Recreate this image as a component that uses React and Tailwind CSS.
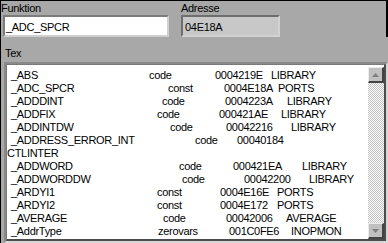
import React from "react";

const rows = [
  { n: "_ABS", t: "code", a: "0004219E", l: "LIBRARY", w: ["w-[138px]", "w-[66px]", "w-[56px]"] },
  { n: "_ADC_SPCR", t: "const", a: "0004E18A", l: "PORTS", w: ["w-[157px]", "w-[56px]", "w-[54px]"] },
  { n: "_ADDDINT", t: "code", a: "0004223A", l: "LIBRARY", w: ["w-[151px]", "w-[63px]", "w-[62px]"] },
  { n: "_ADDFIX", t: "code", a: "000421AE", l: "LIBRARY", w: ["w-[146px]", "w-[62px]", "w-[62px]"] },
  { n: "_ADDINTDW", t: "code", a: "00042216", l: "LIBRARY", w: ["w-[159px]", "w-[56px]", "w-[65px]"] },
  { n: "_ADDRESS_ERROR_INT", t: "code", a: "00040184", l: "", w: ["w-[184px]", "w-[42px]", "w-[60px]"] },
  { wrap: "CTLINTER" },
  { n: "_ADDWORD", t: "code", a: "000421EA", l: "LIBRARY", w: ["w-[168px]", "w-[54px]", "w-[69px]"] },
  { n: "_ADDWORDDW", t: "code", a: "00042200", l: "LIBRARY", w: ["w-[171px]", "w-[62px]", "w-[65px]"] },
  { n: "_ARDYI1", t: "const", a: "0004E16E", l: "PORTS", w: ["w-[146px]", "w-[63px]", "w-[57px]"] },
  { n: "_ARDYI2", t: "const", a: "0004E172", l: "PORTS", w: ["w-[146px]", "w-[63px]", "w-[57px]"] },
  { n: "_AVERAGE", t: "code", a: "00042006", l: "AVERAGE", w: ["w-[152px]", "w-[63px]", "w-[60px]"] },
  { n: "_AddrType", t: "zerovars", a: "001C0FE6", l: "INOPMON", w: ["w-[147px]", "w-[71px]", "w-[62px]"] },
];

function ScrollButton({ down }) {
  return (
    <div className="w-[16px] h-[16px] shrink-0 flex items-center justify-center bg-[#c0c0c0] border-t border-l border-t-[#ececec] border-l-[#ececec] border-b-2 border-r-2 border-b-[#444444] border-r-[#444444]">
      <svg width="7" height="4" viewBox="0 0 7 4">
        {down ? (
          <polygon points="0,0 7,0 3.5,4" fill="#808080" />
        ) : (
          <polygon points="3.5,0 7,4 0,4" fill="#808080" />
        )}
      </svg>
    </div>
  );
}

export default function App() {
  return (
    <div className="w-[388px] h-[243px] overflow-hidden bg-[#a8a8a8] border-t border-l border-black flex flex-col font-['Liberation_Sans',Arial,sans-serif] text-[11px] text-black tracking-[-0.3px]">
      <div className="flex gap-[12px] pt-[1px] border-r-2 border-black">
        <div className="w-[168px] flex flex-col">
          <div className="h-[13px] leading-[13px]">Funktion</div>
          <div className="ml-[2px] w-[166px] h-[22px] bg-white border-t-2 border-l-2 border-t-[#7c7c7c] border-l-[#7c7c7c] border-b-2 border-r-2 border-b-[#cfcfcf] border-r-[#cfcfcf] pl-[1px] pt-[2px] leading-[16px] whitespace-nowrap">
            _ADC_SPCR
          </div>
        </div>
        <div className="w-[99px] flex flex-col">
          <div className="h-[13px] leading-[13px]">Adresse</div>
          <div className="w-[99px] h-[22px] bg-[#c8c8c8] border-t-2 border-l-2 border-t-[#6e6e6e] border-l-[#6e6e6e] border-b-2 border-r-2 border-b-[#d2d2d2] border-r-[#d2d2d2] pl-[2px] pt-[2px] leading-[16px] whitespace-nowrap">
            04E18A
          </div>
        </div>
      </div>
      <div className="mt-[10px] h-[13px] leading-[13px] pl-[4px]">Tex</div>
      <div className="mt-[2px] ml-[3px] flex-1 flex border-t-2 border-l-2 border-t-[#8a8a8a] border-l-[#8a8a8a] border-b-2 border-r-2 border-b-[#d6d6d6] border-r-[#d6d6d6]">
        <div className="flex-1 flex bg-white border-t border-l border-t-[#7a7a7a] border-l-[#7a7a7a] border-b-2 border-r-2 border-b-[#4c4c4c] border-r-[#4c4c4c]">
          <div className="flex-1 flex flex-col pt-[4px] overflow-hidden">
            {rows.map((r, i) =>
              r.wrap ? (
                <div key={i} className="h-[13px] leading-[13px] whitespace-nowrap">
                  {r.wrap}
                </div>
              ) : (
                <div key={i} className="flex h-[13px] leading-[13px] whitespace-nowrap pl-[4px]">
                  <span className={`${r.w[0]} shrink-0`}>{r.n}</span>
                  <span className={`${r.w[1]} shrink-0`}>{r.t}</span>
                  <span className={`${r.w[2]} shrink-0`}>{r.a}</span>
                  <span className="shrink-0">{r.l}</span>
                </div>
              )
            )}
          </div>
          <div className="w-[16px] flex flex-col pt-[2px]">
            <ScrollButton />
            <div className="flex-1 bg-[image:repeating-conic-gradient(#c0c0c0_0%_25%,#ffffff_0%_50%)] bg-[length:2px_2px]" />
            <ScrollButton down />
          </div>
        </div>
      </div>
    </div>
  );
}
